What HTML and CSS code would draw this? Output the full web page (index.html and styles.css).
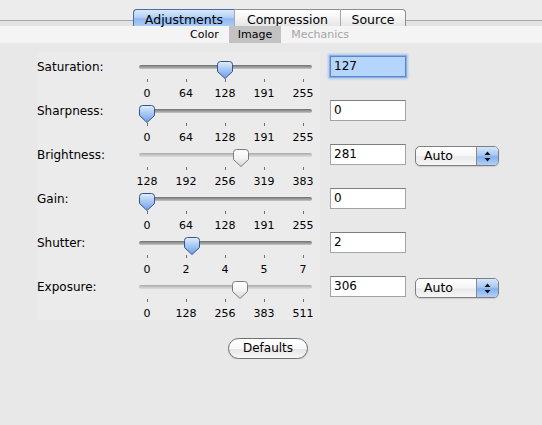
FILE: index.html
```html
<!DOCTYPE html>
<html>
<head>
<meta charset="utf-8">
<link rel="stylesheet" href="styles.css">
</head>
<body>
<svg class="defs" width="0" height="0" aria-hidden="true">
  <defs>
    <linearGradient id="gblue" x1="0" y1="0" x2="0" y2="1">
      <stop offset="0" stop-color="#e3eefc"/>
      <stop offset="0.45" stop-color="#a9c9f4"/>
      <stop offset="1" stop-color="#6d9fe7"/>
    </linearGradient>
    <linearGradient id="gwhite" x1="0" y1="0" x2="0" y2="1">
      <stop offset="0" stop-color="#ffffff"/>
      <stop offset="0.5" stop-color="#f3f3f3"/>
      <stop offset="1" stop-color="#d8d8d8"/>
    </linearGradient>
  </defs>
</svg>

<div class="tabbar">
  <div class="tabs">
    <div class="tab sel first">Adjustments</div>
    <div class="tab mid">Compression</div>
    <div class="tab last">Source</div>
  </div>
</div>
<div class="subtabs">
  <span class="sub">Color</span><span class="sub on">Image</span><span class="sub off">Mechanics</span>
</div>

<div class="content">
  <div class="form">
    <!-- Saturation -->
    <div class="label">Saturation:</div>
    <div class="slider">
      <div class="track"></div>
      <svg class="thumb" style="left:77.7px" viewBox="0 0 16 18"><path class="blue" d="M3.5 0.5H12.5A3 3 0 0 1 15.5 3.5V10.5L8 17.5L0.5 10.5V3.5A3 3 0 0 1 3.5 0.5Z"/></svg>
      <div class="scale"><span><i></i>0</span><span><i></i>64</span><span><i></i>128</span><span><i></i>191</span><span><i></i>255</span></div>
    </div>
    <div class="field focus">127</div>
    <div></div>

    <!-- Sharpness -->
    <div class="label">Sharpness:</div>
    <div class="slider">
      <div class="track"></div>
      <svg class="thumb" style="left:0px" viewBox="0 0 16 18"><path class="blue" d="M3.5 0.5H12.5A3 3 0 0 1 15.5 3.5V10.5L8 17.5L0.5 10.5V3.5A3 3 0 0 1 3.5 0.5Z"/></svg>
      <div class="scale"><span><i></i>0</span><span><i></i>64</span><span><i></i>128</span><span><i></i>191</span><span><i></i>255</span></div>
    </div>
    <div class="field">0</div>
    <div></div>

    <!-- Brightness -->
    <div class="label">Brightness:</div>
    <div class="slider">
      <div class="track off"></div>
      <svg class="thumb" style="left:93.6px" viewBox="0 0 16 18"><path class="white" d="M3.5 0.5H12.5A3 3 0 0 1 15.5 3.5V10.5L8 17.5L0.5 10.5V3.5A3 3 0 0 1 3.5 0.5Z"/></svg>
      <div class="scale"><span><i></i>128</span><span><i></i>192</span><span><i></i>256</span><span><i></i>319</span><span><i></i>383</span></div>
    </div>
    <div class="field">281</div>
    <div class="popup"><span class="ptext">Auto</span><span class="parrow"><svg width="7" height="11" viewBox="0 0 7 11"><path d="M3.5 0.5L6.5 4H0.5Z M3.5 10.5L6.5 7H0.5Z" fill="#111"/></svg></span></div>

    <!-- Gain -->
    <div class="label">Gain:</div>
    <div class="slider">
      <div class="track"></div>
      <svg class="thumb" style="left:0px" viewBox="0 0 16 18"><path class="blue" d="M3.5 0.5H12.5A3 3 0 0 1 15.5 3.5V10.5L8 17.5L0.5 10.5V3.5A3 3 0 0 1 3.5 0.5Z"/></svg>
      <div class="scale"><span><i></i>0</span><span><i></i>64</span><span><i></i>128</span><span><i></i>191</span><span><i></i>255</span></div>
    </div>
    <div class="field">0</div>
    <div></div>

    <!-- Shutter -->
    <div class="label">Shutter:</div>
    <div class="slider">
      <div class="track"></div>
      <svg class="thumb" style="left:44.6px" viewBox="0 0 16 18"><path class="blue" d="M3.5 0.5H12.5A3 3 0 0 1 15.5 3.5V10.5L8 17.5L0.5 10.5V3.5A3 3 0 0 1 3.5 0.5Z"/></svg>
      <div class="scale"><span><i></i>0</span><span><i></i>2</span><span><i></i>4</span><span><i></i>5</span><span><i></i>7</span></div>
    </div>
    <div class="field">2</div>
    <div></div>

    <!-- Exposure -->
    <div class="label">Exposure:</div>
    <div class="slider">
      <div class="track off"></div>
      <svg class="thumb" style="left:93.4px" viewBox="0 0 16 18"><path class="white" d="M3.5 0.5H12.5A3 3 0 0 1 15.5 3.5V10.5L8 17.5L0.5 10.5V3.5A3 3 0 0 1 3.5 0.5Z"/></svg>
      <div class="scale"><span><i></i>0</span><span><i></i>128</span><span><i></i>256</span><span><i></i>383</span><span><i></i>511</span></div>
    </div>
    <div class="field">306</div>
    <div class="popup"><span class="ptext">Auto</span><span class="parrow"><svg width="7" height="11" viewBox="0 0 7 11"><path d="M3.5 0.5L6.5 4H0.5Z M3.5 10.5L6.5 7H0.5Z" fill="#111"/></svg></span></div>
  </div>

  <div class="buttons">
    <div class="button">Defaults</div>
  </div>
</div>
</body>
</html>
```

FILE: styles.css
```css
* { box-sizing: border-box; }

html, body {
  margin: 0;
  padding: 0;
  background: #e8e8e8;
  font-family: "DejaVu Sans", "Liberation Sans", sans-serif;
  color: #000;
}

.defs {
  position: absolute;
  width: 0;
  height: 0;
  overflow: hidden;
}

/* Top tab bar */
.tabbar {
  height: 26px;
  padding-top: 9px;
  padding-left: 133px;
  background: linear-gradient(to bottom, #ececec 0, #ececec 20px, #a6a6a6 20px, #a6a6a6 21px, #e3e3e3 21px, #e3e3e3 26px);
}

.tabs {
  display: flex;
  height: 17px;
}

.tab {
  height: 17px;
  border-top: 1px solid #8e8e8e;
  font-size: 12.5px;
  line-height: 15px;
  padding-top: 2px;
  text-align: center;
  background: linear-gradient(to bottom, #ffffff, #f4f4f4 50%, #e6e6e6);
}

.tab.first {
  width: 101px;
  border-left: 1px solid #8e8e8e;
  border-top-left-radius: 4px;
}

.tab.mid {
  width: 106px;
  border-left: 1px solid #a8a8a8;
}

.tab.last {
  width: 66px;
  border-left: 1px solid #a8a8a8;
  border-right: 1px solid #8e8e8e;
  border-top-right-radius: 4px;
}

.tab.sel {
  border-color: #4a6aa8;
  background: linear-gradient(to bottom, #d9e8fb, #b5d1f6 45%, #8fb9f1 55%, #a9cbf6);
}

/* Sub tabs */
.subtabs {
  height: 17px;
  background: #f4f4f4;
  padding-left: 180px;
  display: flex;
  font-size: 11px;
  line-height: 17px;
}

.sub {
  padding: 0 10px;
}

.sub.on {
  background: #c2c2c2;
  padding: 0 9px;
}

.sub.off {
  color: #a6a6a6;
}

/* Content */
.content {
  padding-top: 9px;
}

.form {
  margin-left: 37px;
  padding-top: 3px;
  padding-bottom: 1px;
  display: grid;
  grid-template-columns: 102px 191px 85px 84px;
  grid-auto-rows: 44px;
  background: linear-gradient(to right, #ebebeb 0, #ebebeb 283px, transparent 283px);
  width: 462px;
}

.label {
  font-size: 12px;
  line-height: 15px;
  padding-top: 5px;
}

.slider {
  position: relative;
  width: 173px;
  display: flex;
  flex-direction: column;
}

.track {
  margin-top: 10px;
  height: 5px;
  border-radius: 3px;
  background: linear-gradient(to bottom, #6f6f6f, #9a9a9a 50%, #c6c6c6);
}

.track.off {
  background: linear-gradient(to bottom, #a8a8a8, #c6c6c6 50%, #dddddd);
}

.thumb {
  position: absolute;
  top: 6px;
  width: 16px;
  height: 18px;
}

.thumb .blue {
  fill: url(#gblue);
  stroke: #34548f;
  stroke-width: 1;
}

.thumb .white {
  fill: url(#gwhite);
  stroke: #7c7c7c;
  stroke-width: 1;
}

.scale {
  margin-top: 10px;
  margin-left: -11.5px;
  display: grid;
  grid-template-columns: repeat(5, 39px);
  font-size: 11px;
  line-height: 11px;
  text-align: center;
}

.scale span {
  display: flex;
  flex-direction: column;
  align-items: center;
}

.scale i {
  display: block;
  width: 1px;
  height: 3px;
  background: #707070;
  margin-bottom: 6px;
}

.field {
  margin-top: 1px;
  width: 76px;
  height: 21px;
  border: 1px solid #a3a3a3;
  border-top-color: #7e7e7e;
  background: #fff;
  font-size: 12px;
  line-height: 19px;
  padding-left: 3px;
}

.field.focus {
  background: #b6d5fd;
  border-color: #5f86c4;
  box-shadow: 0 0 0 1px #8bb0e6, 0 0 2px 2px #a8c6ee;
}

.popup {
  margin-top: 3px;
  width: 84px;
  height: 20px;
  border: 1px solid #7f7f7f;
  border-radius: 5px;
  display: flex;
  overflow: hidden;
  background: linear-gradient(to bottom, #ffffff, #f5f5f5 50%, #e9e9e9 55%, #f6f6f6);
  box-shadow: 0 1px 1px rgba(0,0,0,0.12);
}

.ptext {
  flex: 1;
  font-size: 12.5px;
  line-height: 18px;
  padding-left: 8px;
}

.parrow {
  width: 22px;
  border-left: 1px solid #8a8a8a;
  display: flex;
  align-items: center;
  justify-content: center;
  background: linear-gradient(to bottom, #d6e6fb, #a8c8f3 45%, #82b1ee 55%, #b2d1f7);
}

.buttons {
  padding-left: 228px;
  margin-top: 18px;
  display: flex;
}

.button {
  width: 80px;
  height: 21px;
  border: 1px solid #6f6f6f;
  border-radius: 11px;
  background: linear-gradient(to bottom, #ffffff, #f7f7f7 50%, #e6e6e6 55%, #f8f8f8);
  font-size: 12px;
  line-height: 19px;
  text-align: center;
  box-shadow: 0 1px 1px rgba(0,0,0,0.15);
}
```
